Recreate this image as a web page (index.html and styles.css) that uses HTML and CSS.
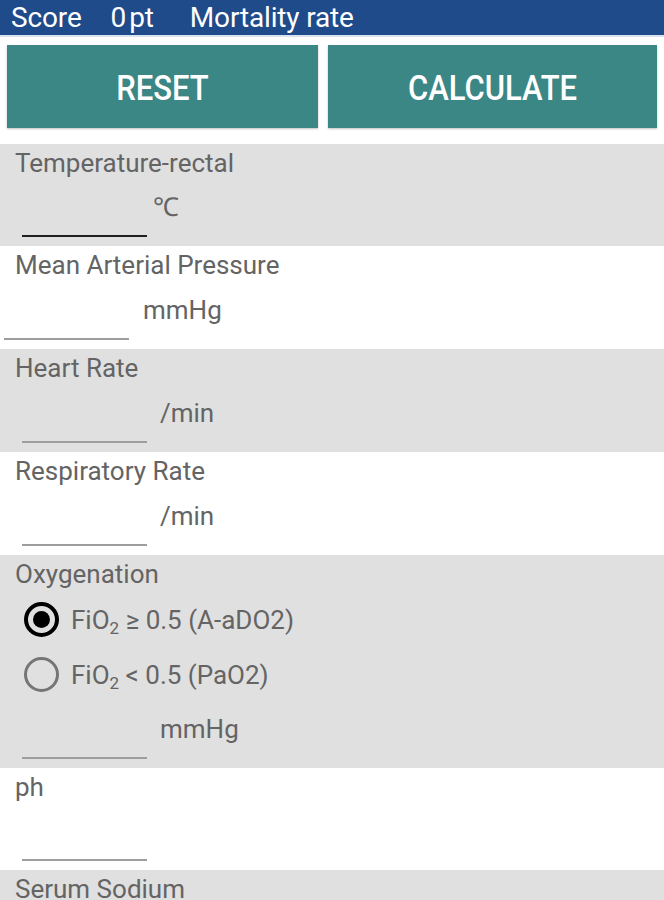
FILE: index.html
```html
<!DOCTYPE html>
<html>
<head>
<meta charset="utf-8">
<link rel="stylesheet" href="styles.css">
</head>
<body>
<div class="header">
  <span class="h-score">Score</span>
  <span class="h-pt">0<span class="pt">pt</span></span>
  <span class="h-mort">Mortality rate</span>
</div>
<div class="buttons">
  <div class="btn btn-left"><span class="btn-text">RESET</span></div>
  <div class="btn btn-right"><span class="btn-text">CALCULATE</span></div>
</div>
<div class="row gray h102">
  <div class="label">Temperature-rectal</div>
  <div class="field">
    <div class="input focused"></div>
    <div class="unit unit-c">℃</div>
  </div>
</div>
<div class="row white">
  <div class="label">Mean Arterial Pressure</div>
  <div class="field field-left">
    <div class="input"></div>
    <div class="unit unit-mmhg">mmHg</div>
  </div>
</div>
<div class="row gray">
  <div class="label">Heart Rate</div>
  <div class="field">
    <div class="input"></div>
    <div class="unit unit-min">/min</div>
  </div>
</div>
<div class="row white">
  <div class="label">Respiratory Rate</div>
  <div class="field">
    <div class="input"></div>
    <div class="unit unit-min">/min</div>
  </div>
</div>
<div class="row gray row-oxy">
  <div class="label">Oxygenation</div>
  <div class="radio-line first">
    <span class="radio checked"><span class="dot"></span></span>
    <span class="rtext">FiO<sub>2</sub> ≥ 0.5 (A-aDO2)</span>
  </div>
  <div class="radio-line">
    <span class="radio"></span>
    <span class="rtext">FiO<sub>2</sub> &lt; 0.5 (PaO2)</span>
  </div>
  <div class="field">
    <div class="input"></div>
    <div class="unit unit-min">mmHg</div>
  </div>
</div>
<div class="row white h102">
  <div class="label">ph</div>
  <div class="field">
    <div class="input"></div>
  </div>
</div>
<div class="row gray">
  <div class="label">Serum Sodium</div>
</div>
</body>
</html>
```
FILE: styles.css
```css
html, body {
  margin: 0;
  padding: 0;
  background: #ffffff;
  font-family: Roboto, "Noto Sans", sans-serif;
  overflow: hidden;
}
.header {
  height: 35px;
  background: #1f4b8a;
  border-bottom: 2px solid #d9e3ef;
  color: #ffffff;
  font-size: 28px;
  line-height: 35px;
  display: flex;
  align-items: center;
  padding-left: 11px;
  letter-spacing: -0.15px;
}
.h-score { margin-right: 29px; }
.h-pt { margin-right: 36px; }
.pt { margin-left: 3px; }
.buttons {
  display: flex;
  gap: 10px;
  padding: 8px 7px 16px 7px;
}
.btn {
  height: 83px;
  box-sizing: border-box;
  padding-top: 4px;
  background: #3b8786;
  color: #ffffff;
  font-size: 31px;
  font-weight: 500;
  display: flex;
  align-items: center;
  justify-content: center;
  box-shadow: 0 1px 2px rgba(0,0,0,0.25);
}
.btn-text {
  display: inline-block;
  transform: scaleY(1.12);
}
.btn-left { width: 311px; }
.btn-right { width: 329px; }
.row {
  height: 103px;
  box-sizing: border-box;
  padding-top: 4px;
  padding-bottom: 9px;
  color: #646464;
  display: flex;
  flex-direction: column;
}
.h102 { height: 102px; }
.gray { background: #e0e0e0; }
.white { background: #ffffff; }
.label {
  font-size: 26px;
  padding-left: 15px;
  line-height: 30px;
}
.field {
  flex: 1;
  display: flex;
  align-items: flex-end;
  padding-left: 22px;
}
.field-left { padding-left: 4px; }
.input {
  width: 125px;
  height: 2px;
  background: #9e9e9e;
}
.input.focused { background: #202020; }
.unit {
  font-size: 26px;
  line-height: 30px;
  margin-bottom: 15px;
}
.unit-c { margin-left: 6px; }
.unit-mmhg { margin-left: 14px; }
.unit-min { margin-left: 13px; }
.row-oxy { height: 213px; }
.radio-line {
  display: flex;
  align-items: center;
  height: 55px;
  padding-left: 24px;
}
.radio-line.first { margin-top: 3px; }
.radio {
  width: 35px;
  height: 35px;
  border: 3px solid #757575;
  border-radius: 50%;
  box-sizing: border-box;
  display: flex;
  align-items: center;
  justify-content: center;
  margin-right: 12px;
}
.radio.checked { border: 4px solid #000000; }
.dot {
  width: 17px;
  height: 17px;
  border-radius: 50%;
  background: #000000;
}
.rtext {
  font-size: 26px;
  color: #646464;
}
.rtext sub {
  font-size: 17px;
  vertical-align: -5px;
  line-height: 0;
}
```
